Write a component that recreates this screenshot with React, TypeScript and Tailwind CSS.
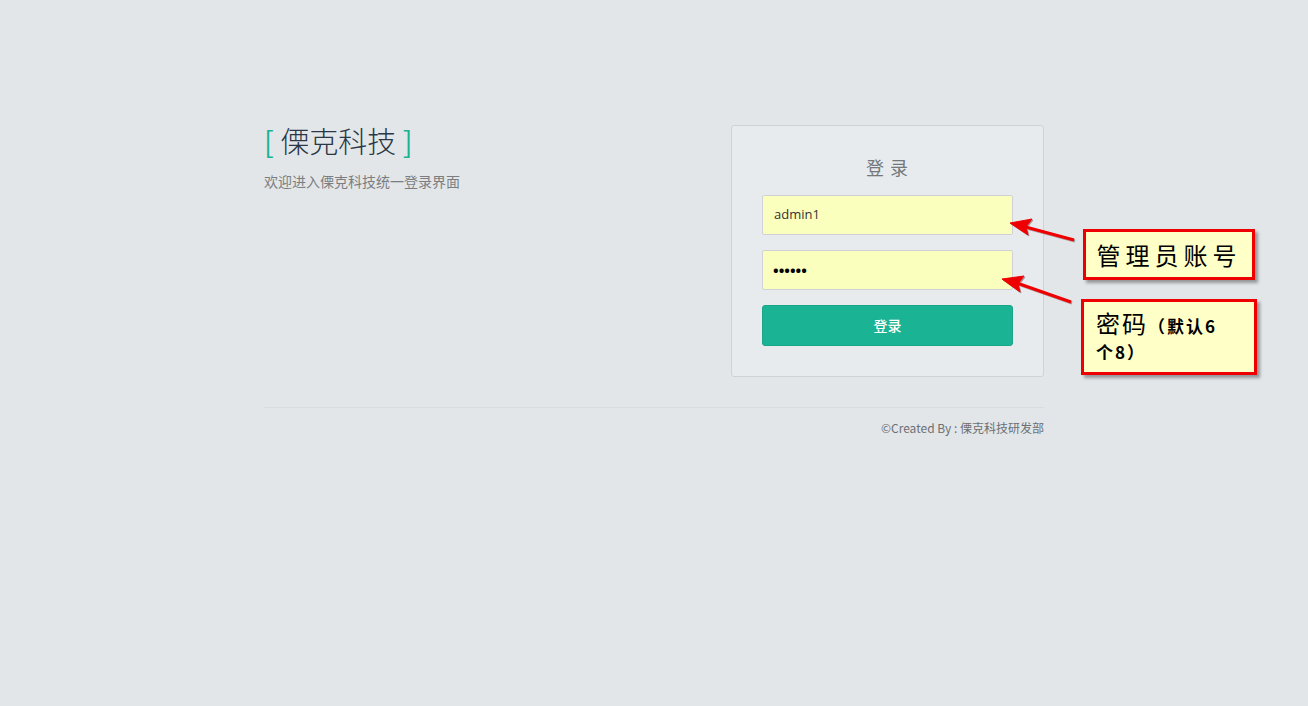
import React from 'react'

const sans = { fontFamily: '"Open Sans", "Noto Sans CJK SC", sans-serif' }
const cjk = { fontFamily: '"Noto Sans CJK SC", sans-serif' }

function Arrows() {
  return (
    <svg className="pointer-events-none absolute left-0 top-0" width="1308" height="706">
      <defs>
        <filter id="sh" x="-20%" y="-20%" width="140%" height="140%">
          <feDropShadow dx="1" dy="1" stdDeviation="0.6" floodColor="#000" floodOpacity="0.35" />
        </filter>
      </defs>
      <g filter="url(#sh)" fill="#ee0000" stroke="#ee0000">
        <line x1="1074" y1="240" x2="1022" y2="226" strokeWidth="3" />
        <path d="M1010 223 L1032 219 L1026 227 L1028 235 Z" strokeWidth="1" />
        <line x1="1071" y1="302" x2="1014" y2="282" strokeWidth="3" />
        <path d="M1002 279 L1024 276 L1018 284 L1020 292 Z" strokeWidth="1" />
      </g>
    </svg>
  )
}

export default function App() {
  return (
    <div className="relative min-h-[706px] w-full bg-[#e3e6e9]" style={sans}>
      <div className="mx-auto w-[780px] pt-[125px]">
        <div className="flex justify-between">
          <div>
            <h2 className="-mt-[2px] text-[29px] font-light leading-[34px] text-[#2a3746]" style={cjk}>
              <span className="font-normal text-[#1ab394]">[</span> 傈克科技 <span className="font-normal text-[#1ab394]">]</span>
            </h2>
            <p className="mt-[14px] text-[14px] text-[#7a7e82]" style={cjk}>
              欢迎进入傈克科技统一登录界面
            </p>
          </div>
          <div className="w-[313px] rounded-[3px] border border-[#cfd3d6] bg-[#e8ebee] px-[30px] pb-[30px] pt-[27px]">
            <h3 className="text-center text-[18px] tracking-[1px] leading-[28px] text-[#74787c]" style={cjk}>
              登 录
            </h3>
            <div className="mt-[14px] flex flex-col gap-[15px]">
              <div className="flex h-[40px] items-center rounded-[2px] border border-[#cfd2d4] bg-[#fbffbd] px-[11px] text-[13px] text-[#333]">
                admin1
              </div>
              <div className="flex h-[40px] items-center rounded-[2px] border border-[#cfd2d4] bg-[#fbffbd] px-[10px] text-[15px] font-bold text-black">
                ••••••
              </div>
              <button className="h-[41px] rounded-[3px] border border-[#18a689] bg-[#1ab394] text-[14px] font-medium text-white" style={cjk}>
                登录
              </button>
            </div>
          </div>
        </div>
        <div className="mt-[30px] border-t border-[#d8dcdf] pt-[11px] text-right text-[12px] text-[#6c7074]" style={cjk}>
          ©Created By : 傈克科技研发部
        </div>
      </div>

      <Arrows />

      <div
        className="absolute left-[1083px] top-[229px] flex h-[51px] w-[172px] items-center justify-center border-[3px] border-[#ee0000] bg-[#ffffc8] shadow-[3px_3px_3px_rgba(0,0,0,0.35)]"
        style={{ fontFamily: '"Noto Sans CJK SC", serif' }}
      >
        <span className="text-[24px] font-normal tracking-[5px] text-black">管理员账号</span>
      </div>
      <div
        className="absolute left-[1081px] top-[299px] h-[76px] w-[176px] border-[3px] border-[#ee0000] bg-[#ffffc8] pl-[12px] pt-[6px] text-black shadow-[3px_3px_3px_rgba(0,0,0,0.35)]"
        style={{ fontFamily: '"Noto Sans CJK SC", serif' }}
      >
        <div className="leading-[30px]">
          <span className="text-[24px] font-normal tracking-[2px]">密码</span>
          <span className="text-[17px] font-bold tracking-[2px]">（默认6</span>
        </div>
        <div className="text-[17px] font-bold leading-[22px] tracking-[2px]">个8）</div>
      </div>
    </div>
  )
}
